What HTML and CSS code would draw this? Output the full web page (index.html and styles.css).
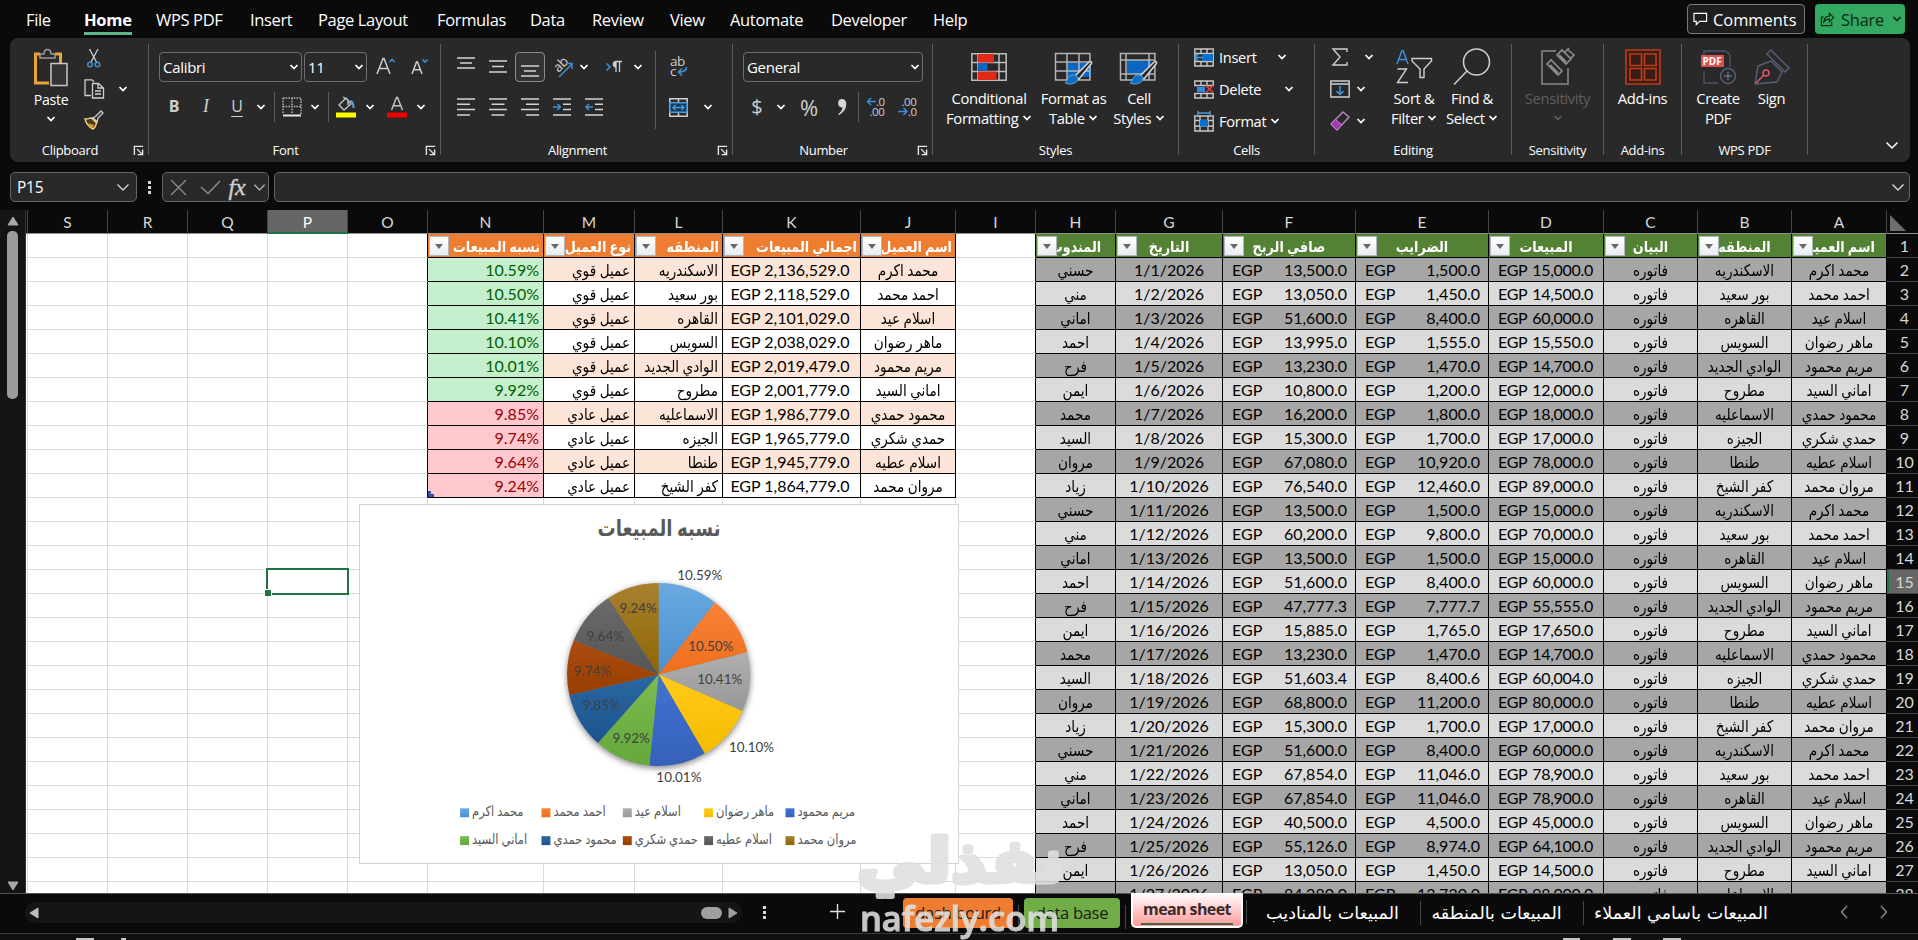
FILE: index.html
```html
<!DOCTYPE html>
<html lang="en">
<head>
<meta charset="utf-8">
<title>Sales workbook</title>
<link rel="stylesheet" href="styles.css">
</head>
<body>
<svg class="defs" width="0" height="0">
  <symbol id="chev" viewBox="0 0 10 8"><path d="M1.5 2l3.5 3.6L8.5 2" fill="none" stroke="currentColor" stroke-width="1.7"/></symbol>
  <symbol id="launch" viewBox="0 0 12 12"><path d="M1.5 11V1.5H11M4.500 4.500l5.500 5.500M10.500 5v5.500H5" fill="none" stroke="#e8e8e8" stroke-width="1.5"/></symbol>
</svg>

<header class="topbar">
  <nav class="tabs">
    <span>File</span><span class="on"><b>Home</b></span><span>WPS PDF</span><span>Insert</span><span>Page Layout</span><span>Formulas</span><span>Data</span><span>Review</span><span>View</span><span>Automate</span><span>Developer</span><span>Help</span>
  </nav>
  <div class="actions">
    <div class="btn comments"><svg width="15" height="14" viewBox="0 0 16 14"><path d="M1 1h13.500v8.500H7l-3.500 3.500V9.500H1z" fill="none" stroke="#fff" stroke-width="1.200"/></svg>Comments</div>
    <div class="btn share"><svg width="16" height="16" viewBox="0 0 17 16"><path d="M4 6H1.500v9h11v-4M4 11c.5-4 3-6 6-6V2l4.500 4.500L10 11V8C7.500 8 5.500 9 4 11z" fill="none" stroke="#0c2a17" stroke-width="1.200"/></svg>Share<svg class="chev"><use href="#chev"/></svg></div>
  </div>
</header>

<section class="ribbon">
  <div class="group clipboard">
    <div class="body">
      <div class="paste">
        <svg width="36" height="40" viewBox="0 0 36 40"><path d="M7 6H2.500v29H16M22 6h5.500v9" fill="none" stroke="#e8a33d" stroke-width="3"/><path d="M7 10V6h4c0-6 7-6 7 0h4v4z" fill="#292929" stroke="#999" stroke-width="1.500"/><path d="M18 15.500h16v22H18z" fill="#333" stroke="#c8c8c8" stroke-width="1.500"/></svg>
        <span>Paste</span><svg class="chev"><use href="#chev"/></svg>
      </div>
      <div class="smalls">
        <span><svg width="16" height="20" viewBox="0 0 16 20"><path d="M3.500 1l7 13M12 1L5 14" stroke="#d0d0d0" stroke-width="1.300"/><circle cx="4" cy="16.500" r="2.300" fill="none" stroke="#3f8fd0" stroke-width="1.500"/><circle cx="11.500" cy="16.500" r="2.300" fill="none" stroke="#3f8fd0" stroke-width="1.500"/></svg></span><i></i>
        <span><svg width="21" height="20" viewBox="0 0 21 20"><path d="M7 16.500H1V.8h7l2 2M8.500 4.500h6l5 4.500v10h-11zM14 4.500V9h5M11 12h6M11 15h6" fill="none" stroke="#cfcfcf" stroke-width="1.300"/></svg></span><span><svg class="chev"><use href="#chev"/></svg></span>
        <span><svg width="20" height="20" viewBox="0 0 20 20"><path d="M9 8l3-2 5-5 2 2-5 5-1 4z" fill="#292929" stroke="#c9c9c9" stroke-width="1.300"/><path d="M8.500 7.500l5 5" stroke="#c9c9c9" stroke-width="1.600"/><path d="M1 9c3 0 5-1 6.500-1l5 5C12 15 11 18 9 19 5 17 2 13 1 9z" fill="#4a3a20" stroke="#f0cf80" stroke-width="1.400"/><path d="M4 13l6 2-1.500 3.500z" fill="#f0962e"/></svg></span><i></i>
      </div>
    </div>
    <div class="label"><span>Clipboard</span><svg><use href="#launch"/></svg></div>
  </div>

  <div class="group font">
    <div class="body">
      <div class="row r1">
        <div class="combo">Calibri<svg class="chev"><use href="#chev"/></svg></div>
        <div class="combo">11<svg class="chev"><use href="#chev"/></svg></div>
        <span class="mid"><svg width="20" height="20" viewBox="0 0 20 20"><path d="M1 17L7 1.500h1L14 17M3.200 11.500h8.600" fill="none" stroke="#cfcfcf" stroke-width="1.500"/><path d="M13.500 5l2.500-2.500L18.500 5" fill="none" stroke="#3f8fd0" stroke-width="1.600"/></svg></span>
        <span class="mid"><svg width="20" height="20" viewBox="0 0 20 20"><path d="M1 17L5.500 5h1L11 17M2.500 12.800h7" fill="none" stroke="#cfcfcf" stroke-width="1.500"/><path d="M11.500 2.500L14 5l2.500-2.500" fill="none" stroke="#3f8fd0" stroke-width="1.600"/></svg></span>
      </div>
      <div class="row r2">
        <span class="mid glyph"><b>B</b></span><span class="mid glyph ital"><em>I</em></span><span class="mid glyph und">U</span><span class="mid"><svg class="chev"><use href="#chev"/></svg></span><span class="vline"></span>
        <span class="mid"><svg width="20" height="20" viewBox="0 0 20 20"><path d="M1 1h18v16M1 1v16M10 1v16M1 9.500h18" fill="none" stroke="#bdbdbd" stroke-width="1.400" stroke-dasharray="1.500 1.200"/><path d="M1 18.500h18" stroke="#e8e8e8" stroke-width="2"/></svg></span>
        <span class="mid"><svg class="chev"><use href="#chev"/></svg></span><span class="vline"></span>
        <span class="mid"><svg width="22" height="22" viewBox="0 0 22 22"><path d="M4 9l7-7 5 6-7 6zM8 1l5 3v5" fill="none" stroke="#c4c4c4" stroke-width="1.400"/><path d="M15 5c3 0 3.500 3 3.500 7" fill="none" stroke="#5fa3dc" stroke-width="2"/><path d="M1 16.500h20v5H1z" fill="#fdfd00"/></svg></span>
        <span class="mid"><svg class="chev"><use href="#chev"/></svg></span>
        <span class="mid"><svg width="22" height="22" viewBox="0 0 22 22"><path d="M5.500 14L10.500 1.500h1l5 12.500M7.300 9.800h7.400" fill="none" stroke="#c8c8c8" stroke-width="1.400"/><path d="M1 16.500h20v5H1z" fill="#f00000"/></svg></span>
        <span class="mid"><svg class="chev"><use href="#chev"/></svg></span>
      </div>
    </div>
    <div class="label"><span>Font</span><svg><use href="#launch"/></svg></div>
  </div>

  <div class="group align">
    <div class="body split">
      <div>
        <div class="row r1">
          <span class="mid"><svg class="ln" width="18" height="20" viewBox="0 0 18 20"><path d="M0 1h18M3 6h12M0 11h18"/></svg></span>
          <span class="mid"><svg class="ln" width="18" height="20" viewBox="0 0 18 20"><path d="M0 4h18M3 9.500h12M0 15h18"/></svg></span>
          <span class="mid boxed"><svg class="ln" width="18" height="20" viewBox="0 0 18 20"><path d="M0 9h18M3 14h12M0 19h18"/></svg></span>
          <span class="mid"><svg width="22" height="22" viewBox="0 0 22 22"><text x="0" y="0" transform="translate(7.500 17) rotate(-45)" class="ic" font-size="13.500">ab</text><path d="M8 21L21 8M15.500 7.500H21V13" fill="none" stroke="#3f8fd0" stroke-width="1.500"/></svg></span>
          <span class="mid"><svg class="chev"><use href="#chev"/></svg></span><i></i>
          <span class="mid"><svg width="18" height="16" viewBox="0 0 18 16"><path d="M1.500 4.500L5 8l-3.500 3.500" fill="none" stroke="#3f8fd0" stroke-width="1.600"/><path d="M11 13V2.500h6M14.500 2.500V13" fill="none" stroke="#cfcfcf" stroke-width="1.300"/><path d="M11 2a3.200 3.200 0 000 6.500z" fill="#cfcfcf"/></svg></span>
          <span class="mid"><svg class="chev"><use href="#chev"/></svg></span>
        </div>
        <div class="row r2">
          <span class="mid"><svg class="ln" width="18" height="18" viewBox="0 0 18 18"><path d="M0 1h18M0 6.300h13M0 11.600h18M0 17h13"/></svg></span>
          <span class="mid"><svg class="ln" width="18" height="18" viewBox="0 0 18 18"><path d="M0 1h18M2.500 6.300h13M0 11.600h18M2.500 17h13"/></svg></span>
          <span class="mid"><svg class="ln" width="18" height="18" viewBox="0 0 18 18"><path d="M0 1h18M5 6.300h13M0 11.600h18M5 17h13"/></svg></span>
          <span class="mid"><svg class="ln" width="18" height="18" viewBox="0 0 18 18"><path d="M0 1h18M10 6.300h8M10 11.600h8M0 17h18"/><path class="bl" d="M0 9h7M4.500 6l3 3-3 3"/></svg></span>
          <span class="mid"><svg class="ln" width="18" height="18" viewBox="0 0 18 18"><path d="M0 1h18M10 6.300h8M10 11.600h8M0 17h18"/><path class="bl" d="M1 9h7M4 6L1 9l3 3"/></svg></span>
        </div>
      </div>
      <span class="tall"></span>
      <div class="wrapcol">
        <span class="mid"><svg width="19" height="22" viewBox="0 0 19 22"><text x="1" y="10" class="ic" font-size="13.500">ab</text><text x="1" y="20" class="ic" font-size="13.500">c</text><path d="M17.500 11c0 4-3 5-8 5M13 12.500L9.500 16l3.500 3.500" fill="none" stroke="#3f8fd0" stroke-width="1.700"/></svg></span><i></i>
        <span class="mid"><svg width="19" height="19" viewBox="0 0 19 19"><path d="M.8.8h17.400v17.400H.8zM9.500 1v4M9.500 14v4" fill="none" stroke="#d0d0d0" stroke-width="1.500"/><path d="M1 4.800h17v9.400H1zM4 9.500h11M6.500 7L4 9.500 6.500 12M12.500 7L15 9.500 12.500 12" fill="#173a57" stroke="#4a9bdc" stroke-width="1.400"/></svg></span><span class="mid"><svg class="chev"><use href="#chev"/></svg></span>
      </div>
    </div>
    <div class="label"><span>Alignment</span><svg><use href="#launch"/></svg></div>
  </div>

  <div class="group number">
    <div class="body">
      <div class="row r1"><div class="combo">General<svg class="chev"><use href="#chev"/></svg></div></div>
      <div class="row r2">
        <span class="mid sym">$</span><span class="mid"><svg class="chev"><use href="#chev"/></svg></span><span class="mid sym pct">%</span>
        <span class="mid"><svg width="12" height="18" viewBox="0 0 12 18"><path d="M5.500 1a4.300 4.300 0 014.800 4.500c0 5-2.500 9-7.300 11.500l-.8-1c3-2 4.300-4.200 4.300-6.500A4.300 4.300 0 015.500 1z" fill="#d6d6d6"/></svg></span><span class="vline"></span>
        <span class="mid"><svg width="20" height="22" viewBox="0 0 20 22"><text x="10" y="9.500" class="ic" font-size="11.500">.0</text><text x="3.500" y="20" class="ic" font-size="11.500">.00</text><path d="M1 5.500h9M5 2L1.500 5.500 5 9" fill="none" stroke="#3f8fd0" stroke-width="1.500"/></svg></span>
        <span class="mid"><svg width="20" height="22" viewBox="0 0 20 22"><text x="3.500" y="9.500" class="ic" font-size="11.500">.00</text><text x="10" y="20" class="ic" font-size="11.500">.0</text><path d="M0 15.500h9M5.500 12L9 15.500 5.500 19" fill="none" stroke="#3f8fd0" stroke-width="1.500"/></svg></span>
      </div>
    </div>
    <div class="label"><span>Number</span><svg><use href="#launch"/></svg></div>
  </div>

  <div class="group styles">
    <div class="body bigs">
      <div class="big"><span class="mid"><svg width="36" height="28" viewBox="0 0 36 28"><path d="M.8.8h34.400v26.400H.8zM7 1v26M28 1v26M1 9.500h34M1 18.500h34" fill="none" stroke="#bdbdbd" stroke-width="1.500"/><path d="M7 1h16v8.500H7zM7 18.500h18.500V27H7z" fill="#e02a16"/><path d="M7 10h9.500v8H7z" fill="#0a66c0"/></svg></span>Conditional<br>Formatting <svg class="chev"><use href="#chev"/></svg></div>
      <div class="big"><span class="mid"><svg width="40" height="36" viewBox="0 0 40 36"><path d="M13 14h24v14H13z" fill="#0a66c0"/><path d="M1.500 4.500h34.400v26.400H1.500zM13 5v26M25 5v26M1.500 13h34M1.500 22h34" fill="none" stroke="#b4b4b4" stroke-width="1.500"/><path d="M21 27L34 14c2-2 5-2 3 1L25 30z" fill="#292929" stroke="#d8d8d8" stroke-width="1.500"/><path d="M11 34c3-1 2-8 8-8 5 0 6 4 4 6-2 3-8 4-12 2z" fill="#0f6cc0" stroke="#58a6e0"/></svg></span>Format as<br>Table <svg class="chev"><use href="#chev"/></svg></div>
      <div class="big"><span class="mid"><svg width="40" height="36" viewBox="0 0 40 36"><path d="M8 11h24v14H8z" fill="#0a66c0"/><path d="M1.500 4.500h34.400v26.400H1.500zM7 5v26M30 5v26M1.500 11h34M1.500 25h34" fill="none" stroke="#b4b4b4" stroke-width="1.500"/><path d="M21 27L34 14c2-2 5-2 3 1L25 30z" fill="#292929" stroke="#d8d8d8" stroke-width="1.500"/><path d="M11 34c3-1 2-8 8-8 5 0 6 4 4 6-2 3-8 4-12 2z" fill="#0f6cc0" stroke="#58a6e0"/></svg></span>Cell<br>Styles <svg class="chev"><use href="#chev"/></svg></div>
    </div>
    <div class="label"><span>Styles</span></div>
  </div>

  <div class="group cells">
    <div class="body stack">
      <div><svg width="20" height="19" viewBox="0 0 20 19"><path d="M.8 1h18.400v17H.8zM7 1v4M13 1v4M7 14v4M13 14v4M1 5.500h18M1 13.500h18" fill="none" stroke="#c8c8c8" stroke-width="1.400"/><path d="M8 6h11v7H8z" fill="#0a6fd0"/><path d="M0 9.500h9M4 6L.8 9.500 4 13" fill="none" stroke="#4a9bdc" stroke-width="1.600"/></svg><span>Insert</span><svg class="chev"><use href="#chev"/></svg></div>
      <div><svg width="20" height="19" viewBox="0 0 20 19"><path d="M.8 1h18.400v4.500H.8zM.8 13.500h18.400V18H.8zM7 1v4M13 1v4M7 14v4M13 14v4" fill="none" stroke="#c8c8c8" stroke-width="1.400"/><path d="M3 7h8v5H3z" fill="#2b8be0"/><path d="M12 5.500l7 7M19 5.500l-7 7" stroke="#e0403a" stroke-width="1.700"/></svg><span>Delete</span><svg class="chev"><use href="#chev"/></svg></div>
      <div><svg width="20" height="21" viewBox="0 0 20 21"><path d="M.8 5h18.400v15H.8zM6 5v15M14 5v15M1 9.500h18M1 15h18" fill="none" stroke="#c8c8c8" stroke-width="1.400"/><path d="M6 9h8v6.500H6z" fill="#0a6fd0"/><path d="M4 2h12M4 0v4M16 0v4" stroke="#4a9bdc" stroke-width="1.400"/></svg><span>Format</span><svg class="chev"><use href="#chev"/></svg></div>
    </div>
    <div class="label"><span>Cells</span></div>
  </div>

  <div class="group editing">
    <div class="body">
      <div class="smalls">
        <span><svg width="16" height="18" viewBox="0 0 16 18"><path d="M15 4V1H1l7 8-7 8h14v-3" fill="none" stroke="#cfcfcf" stroke-width="1.400"/></svg></span><svg class="chev"><use href="#chev"/></svg>
        <span><svg width="20" height="18" viewBox="0 0 20 18"><path d="M.8 1h18.400v16H.8zM1 4h18" fill="none" stroke="#cfcfcf" stroke-width="1.400"/><path d="M10 6v8M6.500 11l3.500 3.500 3.500-3.500" fill="none" stroke="#3f9be0" stroke-width="1.500"/></svg></span><svg class="chev"><use href="#chev"/></svg>
        <span><svg width="20" height="20" viewBox="0 0 20 20"><path d="M1 13L13 1l6 5L7 19z" fill="#292929" stroke="#b98abb" stroke-width="1.400"/><path d="M1 13l4.500-4.500L12 14l-5 5z" fill="#a03aa8" stroke="#d07fd4"/></svg></span><svg class="chev"><use href="#chev"/></svg>
      </div>
      <div class="big"><span class="mid"><svg width="38" height="36" viewBox="0 0 38 36"><path d="M2 15L7 1.500h1L13 15M4 10.500h7" fill="none" stroke="#3f8fd0" stroke-width="1.500"/><path d="M2.500 20h9L2.500 33.500H13" fill="none" stroke="#cfcfcf" stroke-width="1.400"/><path d="M17 9.500h19.500v2.500L29 20v8.500h-4V20L17 12z" fill="none" stroke="#cfcfcf" stroke-width="1.400"/></svg></span>Sort &amp;<br>Filter <svg class="chev"><use href="#chev"/></svg></div>
      <div class="big"><span class="mid"><svg width="38" height="38" viewBox="0 0 38 38"><circle cx="23.500" cy="14" r="13" fill="none" stroke="#d0d0d0" stroke-width="1.500"/><path d="M14 23L1 36.500" stroke="#d0d0d0" stroke-width="1.500"/></svg></span>Find &amp;<br>Select <svg class="chev"><use href="#chev"/></svg></div>
    </div>
    <div class="label"><span>Editing</span></div>
  </div>

  <div class="group sens">
    <div class="big dim"><span class="mid"><svg width="36" height="38" viewBox="0 0 36 38"><path d="M16 3H2v33h26V20" fill="none" stroke="#8a8a8a" stroke-width="1.500"/><path d="M7 16l4-4 11 11-4 4zM17 7l5-5 9 9-5 5zM25 4l4-4M30 11l4-4-6-5" fill="#292929" stroke="#8f8f8f" stroke-width="1.600"/><path d="M10 17l8 8M19 7l7 7" stroke="#8f8f8f" stroke-width="2"/></svg></span>Sensitivity<br><svg class="chev"><use href="#chev"/></svg></div>
    <div class="label"><span>Sensitivity</span></div>
  </div>

  <div class="group addins">
    <div class="big"><span class="mid"><svg width="36" height="36" viewBox="0 0 36 36"><path d="M1 1h34v34H1zM5 5h11.500v11.500H5zM19.500 5H31v11.500H19.500zM5 19.500h11.500V31H5zM19.500 19.500H31V31H19.500z" fill="#3a1d14" stroke="#bf3d18" stroke-width="1.600"/></svg></span>Add-ins</div>
    <div class="label"><span>Add-ins</span></div>
  </div>

  <div class="group wps">
    <div class="bigs">
      <div class="big"><span class="mid"><svg width="36" height="36" viewBox="0 0 36 36"><path d="M4 6V2h22l4 4v12M4 22v12h14" fill="none" stroke="#4c566b" stroke-width="1.300"/><path d="M1 6h23v12H1z" fill="#e04f50"/><text x="2.500" y="15.800" font-size="10" font-weight="bold" fill="#fff" class="pdf">PDF</text><circle cx="28" cy="27" r="7.500" fill="#292929" stroke="#56627a" stroke-width="1.300"/><path d="M28 23v8M24 27h8" stroke="#66738c" stroke-width="1.300"/></svg></span>Create<br>PDF</div>
      <div class="big"><span class="mid"><svg width="36" height="36" viewBox="0 0 36 36"><path d="M1 35L4 17l13-5 11 11-5 10zM13 5l4-4 18 18-4 4z" fill="none" stroke="#56607a" stroke-width="1.400"/><circle cx="12" cy="24" r="3" fill="none" stroke="#e05a68" stroke-width="1.500"/><path d="M10 26l-8 8" stroke="#e05a68" stroke-width="1.500"/></svg></span>Sign</div>
    </div>
    <div class="label"><span>WPS PDF</span></div>
  </div>
  <div class="collapse"><svg width="14" height="9" viewBox="0 0 14 9"><path d="M1.500 1.500L7 7l5.500-5.500" fill="none" stroke="#fff" stroke-width="1.500"/></svg></div>
</section>

<section class="formula">
  <div class="fbox name">P15<svg width="14" height="9" viewBox="0 0 14 9"><path d="M1.500 1.500L7 7l5.500-5.500" fill="none" stroke="#d0d0d0" stroke-width="1.400"/></svg></div>
  <div class="dots"><i></i><i></i><i></i></div>
  <div class="fbox fx">
    <svg width="17" height="17" viewBox="0 0 17 17"><path d="M1 1l15 15M16 1L1 16" stroke="#8d8d8d" stroke-width="1.300"/></svg>
    <svg width="21" height="15" viewBox="0 0 21 15"><path d="M1 7l7 6.500L20 1" fill="none" stroke="#8d8d8d" stroke-width="1.400"/></svg>
    <em>fx</em>
    <svg width="13" height="9" viewBox="0 0 14 9"><path d="M1.500 1.500L7 7l5.500-5.500" fill="none" stroke="#bbb" stroke-width="1.300"/></svg>
  </div>
  <div class="fbox input"><svg width="14" height="9" viewBox="0 0 14 9"><path d="M1.500 1.500L7 7l5.500-5.500" fill="none" stroke="#d0d0d0" stroke-width="1.500"/></svg></div>
</section>

<main class="work">
  <div class="vscroll">
    <svg width="12" height="10" viewBox="0 0 12 10"><path d="M6 1l5 8H1z" fill="#a8a8a8" stroke="#a8a8a8" stroke-linejoin="round"/></svg>
    <div class="thumb"></div>
    <svg class="down" width="12" height="10" viewBox="0 0 12 10"><path d="M6 9l5-8H1z" fill="#a8a8a8" stroke="#a8a8a8" stroke-linejoin="round"/></svg>
  </div>
  <div class="canvas">
    <div class="sheet" id="sheet"></div>
    <div class="selection"></div>
    <svg class="chart" id="chart" width="600" height="360" viewBox="0 0 600 360"></svg>
  </div>
</main>

<footer class="bottom">
  <div class="hscroll">
    <svg width="10" height="12" viewBox="0 0 10 12"><path d="M1 6l8-5v10z" fill="#bdbdbd" stroke="#bdbdbd" stroke-linejoin="round"/></svg>
    <i></i>
    <svg width="10" height="12" viewBox="0 0 10 12"><path d="M9 6L1 1v10z" fill="#a0a0a0" stroke="#a0a0a0" stroke-linejoin="round"/></svg>
  </div>
  <div class="dots"><i></i><i></i><i></i></div>
  <svg class="plus" width="15" height="15" viewBox="0 0 15 15"><path d="M7.500 0v15M0 7.500h15" stroke="#e0e0e0" stroke-width="1.400"/></svg>
  <div class="sheets">
    <span class="s dash">dash bourd</span>
    <span class="s data">data base</span>
    <span class="s mean"><b>mean sheet</b></span>
    <span class="s a1">المبيعات بالمناديب</span>
    <span class="s a2">المبيعات بالمنطقه</span>
    <span class="s a3">المبيعات باسامي العملاء</span>
  </div>
  <div class="navs"><svg width="8" height="14" viewBox="0 0 8 14"><path d="M7 1L1.500 7 7 13" fill="none" stroke="#8a8a8a" stroke-width="1.400"/></svg><svg width="8" height="14" viewBox="0 0 8 14"><path d="M1 1l5.500 6L1 13" fill="none" stroke="#8a8a8a" stroke-width="1.400"/></svg></div>
</footer>
<div class="status"><i class="st1"></i><i class="st2"></i><i class="st3"></i><i class="st4"></i><i class="st5"></i></div>

<svg class="mark" width="220" height="120" viewBox="0 0 220 120">
  <text class="mk-ar" x="5" y="56" textLength="208" lengthAdjust="spacingAndGlyphs" direction="rtl" text-anchor="end">نفذلي</text>
  <text class="mk-en" x="8" y="105" textLength="199" lengthAdjust="spacingAndGlyphs">nafezly.com</text>
</svg>
<script src="app.js"></script>
</body>
</html>
```
FILE: styles.css
```css
* { box-sizing: border-box; }
html, body { margin: 0; height: 940px; overflow: hidden; }
body { background: #0a0a0a; color: #fff; font-family: "Open Sans", "Noto Sans", "DejaVu Sans", sans-serif; display: flex; flex-direction: column; width: 1918px; position: relative; }
.defs { position: absolute; }
svg { display: block; flex: none; overflow: visible; }
.chev { width: 10px; height: 8px; color: #fff; }
.mid { display: grid; place-items: center; }

.topbar { height: 38px; display: flex; justify-content: space-between; flex: none; }
.tabs { display: grid; grid-template-columns: 58px 72px 94px 68px 119px 93px 62px 78px 60px 101px 102px 60px; padding-left: 26px; font-size: 16.5px; letter-spacing: -.35px; line-height: 40px; white-space: nowrap; }
.tabs .on b { display: inline-block; height: 35px; border-bottom: 3px solid #5fb585; letter-spacing: -.3px; }
.actions { display: flex; gap: 10px; padding: 4px 13px 0 0; }
.btn { height: 30px; border-radius: 4px; display: flex; align-items: center; font-size: 16.400px; }
.comments { width: 118px; border: 1px solid #7b7b7b; background: #1f1f1f; padding-left: 5px; gap: 5px; letter-spacing: 0; }
.share { width: 90px; background: #33a860; color: #0c2a17; padding-left: 5px; gap: 5px; letter-spacing: -.2px; }
.share .chev { color: #0c2a17; margin-left: 3px; }

.ribbon { height: 124px; margin: 0 8px 0 10px; padding-top: 6px; background: #292929; border-radius: 8px; display: flex; flex: none; }
.group { height: 111px; border-right: 1px solid #5c5c5c; display: flex; flex-direction: column; justify-content: space-between; flex: none; }
.label { height: 18px; padding-top: 7px; display: flex; align-items: center; font-size: 13px; line-height: 12px; letter-spacing: -.3px; white-space: nowrap; }
.label span { flex: 1; text-align: center; }
.label svg { width: 11px; height: 11px; margin: 1px 4px 0 3px; }
.clipboard { width: 139px; }
.font { width: 292px; }
.align { width: 292px; }
.number { width: 200px; }
.styles { width: 246px; }
.cells { width: 136px; }
.editing { width: 197px; }
.sens { width: 92px; }
.addins { width: 78px; }
.wps { width: 126px; }
.clipboard .body { display: flex; padding-left: 11px; }
.paste { width: 60px; padding-top: 4px; display: flex; flex-direction: column; align-items: center; font-size: 14.200px; letter-spacing: -.3px; line-height: 20px; }
.paste svg:first-child { margin-bottom: 2px; }
.paste .chev { margin-top: 5px; }
.smalls { display: grid; grid-template-columns: 26px 32px; grid-auto-rows: 31px; place-items: center; margin-top: -2px; }
.row { display: grid; height: 30px; }
.font .body, .number .body { padding: 8px 0 0 9px; display: grid; row-gap: 10px; }
.font .r1 { grid-template-columns: 143px 63px 33px 33px; column-gap: 2px; margin-left: 1px; }
.font .r2 { grid-template-columns: 32px 32px 30px 18px 8px 27px 20px 6px 30px 17px 38px 8px; }
.combo { height: 30px; border: 1px solid #6e6e6e; border-radius: 4px; padding: 0 2px 0 3px; display: flex; align-items: center; justify-content: space-between; font-size: 15px; letter-spacing: -.3px; }
.glyph { font-size: 16px; color: #cfcfcf; line-height: 28px; padding-bottom: 2px; }
.ital { font-family: "Liberation Serif", serif; font-size: 18px; }
.und { text-decoration: underline; text-underline-offset: 4px; text-decoration-thickness: 1px; }
.vline { width: 1px; background: #5c5c5c; justify-self: center; }
.split { display: flex; padding: 8px 0 0 9px; }
.align .r1 { grid-template-columns: 32px 32px 32px 32px 11px 14px 22px 26px; }
.align .r2 { grid-template-columns: repeat(5, 32px); margin-top: 10px; }
.boxed { border: 1px solid #8c8c8c; border-radius: 4px; background: #333; margin: 0 1px; }
.ln { fill: none; stroke: #d4d4d4; stroke-width: 1.5px; }
.ln .bl { stroke: #3f8fd0; }
.ic { font-family: "Open Sans", sans-serif; fill: #cfcfcf; letter-spacing: -.4px; }
.tall { width: 1px; height: 78px; background: #5c5c5c; margin: -1px 0 0 4px; }
.wrapcol { display: grid; grid-template-columns: 30px 30px; grid-template-rows: 30px 30px; row-gap: 10px; margin-left: 7px; }
.number .r1 { margin-left: 1px; }
.number .r1 .combo { width: 180px; }
.number .r2 { margin-left: 1px; grid-template-columns: 28px 20px 36px 30px 3px 32px 32px; }
.sym { font-size: 20px; line-height: 28px; color: #cfcfcf; font-weight: 400; }
.pct { font-size: 22px; }
.bigs { display: grid; }
.styles .bigs { grid-template-columns: 98px 71px 60px; padding-left: 7px; }
.wps .bigs { grid-template-columns: 70px 37px; padding-left: 1px; }
.big { text-align: center; font-size: 14.800px; letter-spacing: -.35px; line-height: 20px; white-space: nowrap; }
.big .mid { height: 45px; margin-bottom: -1px; }
.big .chev { display: inline-block; vertical-align: 2px; }
.dim { color: #5e5e5e; }
.dim .chev { color: #5e5e5e; }
.stack { display: grid; grid-auto-rows: 32px; padding-left: 15px; margin-top: -3px; font-size: 14.600px; letter-spacing: -.3px; }
.stack > div { display: flex; align-items: center; }
.stack span { margin-left: 5px; }
.stack .chev { margin-left: 20px; }
.stack div:nth-child(2) .chev { margin-left: 23px; }
.stack div:nth-child(3) .chev { margin-left: 4px; }
.editing .body { display: flex; }
.editing .smalls { grid-template-columns: 40px 10px; grid-auto-rows: 32px; margin: -3px 0 0 5px; }
.editing .smalls > .chev { margin-left: -8px; }
.editing .smalls > .chev:nth-child(2) { margin-left: 8px; }
.editing .big { width: 60px; margin-left: 14px; }
.editing .big + .big { margin-left: -2px; }
.pdf { letter-spacing: 0; }
.collapse { margin: 97px 0 0 auto; padding-right: 11px; }

.formula { height: 48px; padding: 10px 8px 8px 10px; display: flex; flex: none; }
.fbox { height: 30px; border: 1px solid #666; border-radius: 5px; background: #292929; display: flex; align-items: center; justify-content: space-between; }
.name { width: 127px; padding: 0 6px; font-size: 15.500px; letter-spacing: -.2px; }
.dots { width: 25px; display: flex; flex-direction: column; align-items: center; justify-content: center; gap: 2px; }
.dots i { width: 3px; height: 3px; background: #d8d8d8; }
.fx { width: 107px; padding: 0 2px 0 7px; }
.fx em { font: italic 24px/22px "Liberation Serif", serif; color: #d0d0d0; -webkit-text-stroke: .4px #d0d0d0; }
.fx svg + svg { margin-left: 6px; }
.input { flex: 1; margin-left: 5px; justify-content: flex-end; padding-right: 4px; }

.work { display: flex; height: 684px; flex: none; border-bottom: 1px solid #555; }
.vscroll { width: 26px; background: #141414; display: flex; flex-direction: column; align-items: center; padding: 6px 0 2px; border-right: 1px solid #333; }
.thumb { width: 11px; height: 168px; margin-top: 5px; border-radius: 5px; background: #9b9b9b; }
.vscroll .down { margin-top: auto; }
.canvas { position: relative; width: 1892px; height: 683px; overflow: hidden; }
.sheet { display: grid; grid-template-columns: 2px 80px 80px 80px 80px 80px 116px 91px 88px 138px 95px 80px 80px 107px 133px 133px 115px 94px 94px 95px 31px; grid-auto-rows: 24px; }
.c { background: #fff; border-right: 1px solid #dadada; border-bottom: 1px solid #dadada; color: #000; font: 16px/24px Lato, "DejaVu Sans", sans-serif; white-space: nowrap; overflow: hidden; position: relative; }
.h { background: #0a0a0a; color: #d8d8d8; border-right-color: #454545; border-bottom-color: #8e8e8e; text-align: center; font-size: 15.500px; line-height: 25px; }
.h.cur { background: #666; color: #fff; border-bottom: 2px solid #217346; }
.n { background: #0a0a0a; color: #d8d8d8; border-right: 0; border-bottom-color: #454545; text-align: center; padding-left: 4px; }
.n.cur { background: #666; border-left: 2px solid #217346; padding-left: 2px; }
.corner { border-right: 0; }
.corner svg { margin: 5px 0 0 3px; }
.ar { font-size: 13.600px; direction: rtl; text-align: center; }
.ar > b, .ar > em { display: inline-block; font-style: normal; font-weight: inherit; line-height: 23px; transform: scaleY(1.18); }
.t1, .t2 { border-color: #000; }
.edge { border-right-color: #000; }
.t1.hd, .t2.hd { color: #fff; font-weight: bold; font-size: 12.800px; }
.t2.hd { background: #548235; }
.t2.dk { background: #a6a6a6; }
.t2.lt { background: #dbdbdb; }
.t1.hd { background: #ed7d31; text-align: right; padding-right: 3px; }
.t1.dk { background: #fce4d6; }
.t1.r { text-align: right; padding-right: 4px; }
.t1.k { text-align: center; padding-right: 3px; }
.t1.good { background: #c6efce; color: #006100; }
.t1.bad { background: #ffc7ce; color: #9c0006; }
.ctr { text-align: center; }
.money { display: flex; justify-content: space-between; padding: 0 8px 0 9px; }
.money.d { padding: 0 10px 0 9px; letter-spacing: -.3px; }
.filter { position: absolute; left: 1px; top: 2px; width: 20px; height: 20px; border: 1px solid #b0b6bd; background: linear-gradient(#fff, #e8ecf2); display: grid; place-items: center; }
.selection { position: absolute; left: 240px; top: 358px; width: 83px; height: 27px; border: 2px solid #217346; }
.selection::after { content: ""; position: absolute; left: -3px; bottom: -3px; width: 6px; height: 6px; background: #217346; border: 1px solid #fff; border-width: 1px 1px 0 0; }
.handle { position: absolute; left: 0; bottom: 0; width: 6px; height: 6px; }
.chart { position: absolute; left: 333px; top: 294px; background: #fff; border: 1px solid #d4d4d4; }
.chart text { font-family: Lato, "DejaVu Sans", sans-serif; font-size: 13.500px; fill: #404040; }
.chart .title { font-size: 18.200px; font-weight: bold; fill: #595959; }
.chart .lg { font-size: 11.600px; fill: #595959; }
.shadow { filter: drop-shadow(0 2px 3px rgba(0, 0, 0, .5)); }

.bottom { height: 39px; display: flex; align-items: flex-start; flex: none; }
.hscroll { width: 717px; height: 21px; margin: 8px 0 0 25px; border-radius: 10px; background: #151515; display: flex; align-items: center; padding: 0 4px 0 4px; }
.hscroll i { width: 21px; height: 12px; border-radius: 6px; background: #a0a0a0; margin: 0 6px 0 auto; }
.bottom .dots { height: 36px; width: 44px; }
.plus { margin: 10px 0 0 44px; }
.sheets { display: flex; margin-left: 53px; font-size: 16.500px; letter-spacing: -.3px; line-height: 30px; text-align: center; white-space: nowrap; }
.s { position: relative; flex: none; }
.s::after { content: ""; position: absolute; top: 7px; right: -6px; width: 1px; height: 24px; background: #454545; }
.dash, .data { height: 30px; margin-top: 4px; border-radius: 4px; color: #1b1b1b; }
.dash { width: 110px; background: #ee7d31; margin-left: 5px; }
.data { width: 96px; background: #70ad47; margin-left: 11px; }
.mean { width: 112px; height: 35px; margin: -1px 0 0 11px; border-radius: 0 0 5px 5px; color: #3b2b2b; background: linear-gradient(#fff, #ff9a9a); border: 2px solid #fff; border-top: 0; padding: 2px 8px 0; }
.mean b { display: block; height: 30px; border-bottom: 2px solid #376b45; line-height: 29px; font-size: 16px; letter-spacing: -.6px; font-weight: 700; }
.a1, .a2, .a3 { font-family: "DejaVu Sans", sans-serif; font-size: 17.500px; line-height: 38px; letter-spacing: 0; direction: rtl; }
.a1 { width: 165px; margin-left: 7px; }
.a2 { width: 163px; }
.a3 { width: 206px; }
.a3::after { display: none; }
.navs { display: flex; gap: 32px; margin: 11px 30px 0 auto; }
.status { height: 7px; border-top: 1px solid #3c3c3c; background: #101010; display: flex; flex: none; align-items: flex-end; }
.status i { height: 2px; background: #c4c4c4; }
.st1 { width: 18px; margin-left: 76px; }
.st2 { width: 5px; margin-left: 27px; }
.st3 { width: 17px; margin-left: 1437px; }
.st4 { width: 18px; margin-left: 33px; }
.st5 { width: 18px; margin-left: 32px; }
.mark { position: absolute; left: 852px; top: 826px; opacity: .88; fill: #e0e0e0; }
.mk-ar { font: bold 60px "DejaVu Sans", sans-serif; stroke: #e0e0e0; stroke-width: 5px; stroke-linejoin: round; }
.mk-en { font: 600 34px "Open Sans", sans-serif; stroke: #e0e0e0; stroke-width: 1px; }
```
FILE: app.js
```js
const names = ["محمد اكرم", "احمد محمد", "اسلام عيد", "ماهر رضوان", "مريم محمود", "اماني السيد", "محمود حمدي", "حمدي شكري", "اسلام عطيه", "مروان محمد"];
const regions = ["الاسكندريه", "بور سعيد", "القاهره", "السويس", "الوادي الجديد", "مطروح", "الاسماعليه", "الجيزه", "طنطا", "كفر الشيخ"];
const reps = ["حسني", "مني", "اماني", "احمد", "فرح", "ايمن", "محمد", "السيد", "مروان", "زياد"];
// [sales, tax] per invoice; net profit is the difference
const invoices = [[15000,1500],[14500,1450],[60000,8400],[15550,1555],[14700,1470],[12000,1200],[18000,1800],[17000,1700],[78000,10920],[89000,12460],[15000,1500],[70000,9800],[15000,1500],[60000,8400],[55555,7777.7],[17650,1765],[14700,1470],[60004,8400.6],[80000,11200],[17000,1700],[60000,8400],[78900,11046],[78900,11046],[45000,4500],[64100,8974],[14500,1450],[98000,13720]];
const totals = [2136529, 2118529, 2101029, 2038029, 2019479, 2001779, 1986779, 1965779, 1945779, 1864779];
const shares = [10.59, 10.50, 10.41, 10.10, 10.01, 9.92, 9.85, 9.74, 9.64, 9.24];
const money = v => v.toLocaleString("en-US", { minimumFractionDigits: 1, maximumFractionDigits: 1 });
const cell = (cls, html = "") => `<div class="c ${cls}">${html}</div>`;
const word = (cls, text) => cell(`${cls} ar`, `<em>${text}</em>`);
const filter = '<span class="filter"><svg width="8" height="5" viewBox="0 0 8 5"><path d="M0 0h8L4 5z" fill="#666"/></svg></span>';
const heading = cls => t => cell(`${cls} hd ar`, `<b>${t}</b>${filter}`);

let out = cell("h");
for (const l of "SRQPONMLKJIHGFEDCBA") out += cell("h" + (l === "P" ? " cur" : ""), l);
out += cell("h corner", '<svg width="16" height="16" viewBox="0 0 16 16"><path d="M0 0v16h16z" fill="#6e6e6e"/></svg>');

for (let r = 1; r <= 28; r++) {
  out += cell("") + cell("").repeat(4) + cell(r <= 11 ? "edge" : "");
  const i = r - 2, k = i % 10;
  if (r === 1) {
    out += ["نسبه المبيعات", "نوع العميل", "المنطقه", "اجمالي المبيعات", "اسم العميل"].map(heading("t1")).join("");
  } else if (r <= 11) {
    const shade = i % 2 ? "lt" : "dk";
    const corner = r === 11 ? '<svg class="handle" viewBox="0 0 6 6"><path d="M0 0v6h6V3H3V0z" fill="#3b4fa0"/></svg>' : "";
    out += cell("t1 r " + (i < 6 ? "good" : "bad"), shares[i].toFixed(2) + "%" + corner);
    out += word(`t1 r ${shade}`, i < 6 ? "عميل قوي" : "عميل عادي");
    out += word(`t1 r ${shade}`, regions[i]);
    out += cell(`t1 k ${shade}`, "EGP " + money(totals[i]));
    out += word(`t1 ${shade}`, names[i]);
  } else {
    out += cell("").repeat(5);
  }
  out += cell("edge");
  if (r === 1) {
    out += ["المندوب", "التاريخ", "صافي الربح", "الضرايب", "المبيعات", "البيان", "المنطقه", "اسم العميل"].map(heading("t2")).join("");
  } else {
    const s = "t2 " + (i % 2 ? "lt" : "dk");
    const [sale, tax] = invoices[i];
    out += word(s, reps[k]) + cell(`${s} ctr`, `1/${i + 1}/2026`);
    out += cell(`${s} money`, `<span>EGP</span><span>${money(sale - tax)}</span>`);
    out += cell(`${s} money`, `<span>EGP</span><span>${money(tax)}</span>`);
    out += cell(`${s} money d`, `<span>EGP</span><span>${money(sale)}</span>`);
    out += word(s, "فاتوره") + word(s, regions[k]) + word(s, names[k]);
  }
  out += cell("n" + (r === 15 ? " cur" : ""), r);
}
document.getElementById("sheet").innerHTML = out;

// Pie chart
const colors = [["#6aa9e0","#4a8fd0"],["#f98238","#ec6f1c"],["#b0b0b0","#979797"],["#ffcb1a","#f5bb00"],["#4272d0","#3561bb"],["#7bbb50","#66a83c"],["#2a66a0","#1b5590"],["#ae4c12","#963e00"],["#6b6b6b","#555555"],["#a98030","#8d6600"]];
const spots = [[341,71],[352,143],[361,176],[393,244],[320,275],[272,235],[242,202],[233,168],[246,133],[279,105]];
const cx = 299.6, cy = 170.5, rad = 92;
const sum = shares.reduce((a, b) => a + b);
let ang = 0, svg = "<defs>", slices = "", marks = "";
colors.forEach(([a, b], i) => {
  svg += `<linearGradient id="g${i}" x1="0" y1="0" x2="0" y2="1"><stop offset="0" stop-color="${a}"/><stop offset="1" stop-color="${b}"/></linearGradient>`;
  const end = ang + shares[i] / sum * Math.PI * 2;
  const pt = t => `${(cx + rad * Math.sin(t)).toFixed(2)} ${(cy - rad * Math.cos(t)).toFixed(2)}`;
  slices += `<path d="M${cx} ${cy}L${pt(ang)}A${rad} ${rad} 0 0 1 ${pt(end)}z" fill="url(#g${i})"/>`;
  ang = end;
  marks += `<text x="${spots[i][0]}" y="${spots[i][1] + 4}" text-anchor="middle">${shares[i].toFixed(2)}%</text>`;
  const x = 100 + (i % 5) * 81.8, y = i < 5 ? 305 : 333;
  marks += `<rect x="${x}" y="${y}" width="9" height="9" fill="url(#g${i})"/><text class="lg" transform="translate(${x + 12} ${y + 8}) scale(1 1.2)">${names[i]}</text>`;
});
svg += `</defs><text class="title" transform="translate(300 31) scale(1 1.25)" text-anchor="middle">نسبه المبيعات</text><g class="shadow">${slices}</g>${marks}`;
document.getElementById("chart").innerHTML = svg;
```
